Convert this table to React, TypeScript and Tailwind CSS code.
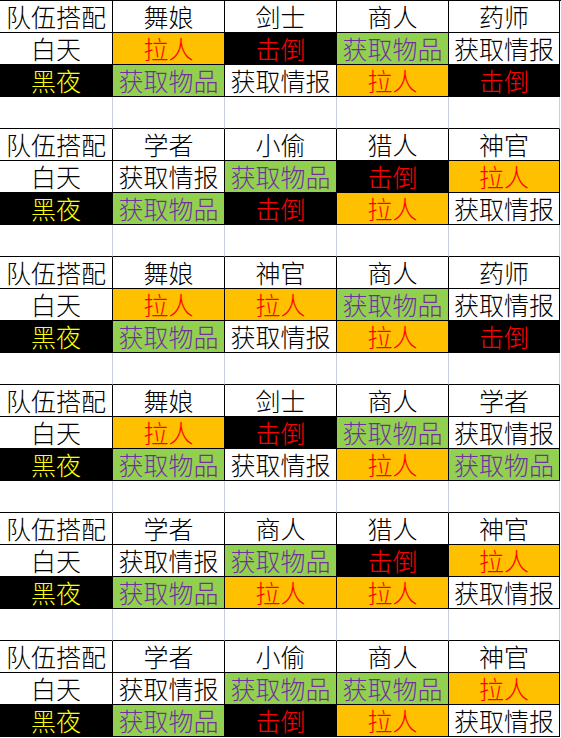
type Action = "拉人" | "击倒" | "获取物品" | "获取情报";

interface Team {
  members: string[];
  day: Action[];
  night: Action[];
}

const teams: Team[] = [
  {
    members: ["舞娘", "剑士", "商人", "药师"],
    day: ["拉人", "击倒", "获取物品", "获取情报"],
    night: ["获取物品", "获取情报", "拉人", "击倒"],
  },
  {
    members: ["学者", "小偷", "猎人", "神官"],
    day: ["获取情报", "获取物品", "击倒", "拉人"],
    night: ["获取物品", "击倒", "拉人", "获取情报"],
  },
  {
    members: ["舞娘", "神官", "商人", "药师"],
    day: ["拉人", "拉人", "获取物品", "获取情报"],
    night: ["获取物品", "获取情报", "拉人", "击倒"],
  },
  {
    members: ["舞娘", "剑士", "商人", "学者"],
    day: ["拉人", "击倒", "获取物品", "获取情报"],
    night: ["获取物品", "获取情报", "拉人", "获取物品"],
  },
  {
    members: ["学者", "商人", "猎人", "神官"],
    day: ["获取情报", "获取物品", "击倒", "拉人"],
    night: ["获取物品", "拉人", "拉人", "获取情报"],
  },
  {
    members: ["学者", "小偷", "商人", "神官"],
    day: ["获取情报", "获取物品", "获取物品", "拉人"],
    night: ["获取物品", "击倒", "拉人", "获取情报"],
  },
];

// 单元格配色，照着表格里的填充色
const actionStyle: Record<Action, string> = {
  拉人: "bg-[#ffc000] text-[#ff0000]",
  击倒: "bg-black text-[#ff0000]",
  获取物品: "bg-[#92d050] text-[#7030a0]",
  获取情报: "bg-white text-black",
};

function Cell({ children, className = "" }: { children?: React.ReactNode; className?: string }) {
  return (
    <div
      className={`flex h-[32px] items-center justify-center whitespace-nowrap border-b border-r border-black leading-none ${className}`}
    >
      {children}
    </div>
  );
}

export default function App() {
  return (
    <div
      className="min-h-[738px] w-[561px] bg-white text-[25px] font-light text-black"
      style={{ fontFamily: '"Noto Sans CJK SC", "Noto Sans", sans-serif' }}
    >
      <div className="grid grid-cols-[113px_112px_112px_112px_111px] border-t border-black">
        {teams.map((team, i) => (
          <div key={i} className="contents">
            {/* 组与组之间空一行，只留浅色网格线 */}
            {i > 0 &&
              [0, 1, 2, 3, 4].map((c) => (
                <div key={`gap-${c}`} className="h-[32px] border-b border-r border-b-black border-r-[#c8cde0]" />
              ))}
            <Cell className="bg-white">队伍搭配</Cell>
            {team.members.map((m, c) => (
              <Cell key={`m-${c}`} className="bg-white">
                {m}
              </Cell>
            ))}
            <Cell className="bg-white">白天</Cell>
            {team.day.map((a, c) => (
              <Cell key={`d-${c}`} className={actionStyle[a]}>
                {a}
              </Cell>
            ))}
            <Cell className="bg-black text-[#ffff00]">黑夜</Cell>
            {team.night.map((a, c) => (
              <Cell key={`n-${c}`} className={actionStyle[a]}>
                {a}
              </Cell>
            ))}
          </div>
        ))}
      </div>
    </div>
  );
}
